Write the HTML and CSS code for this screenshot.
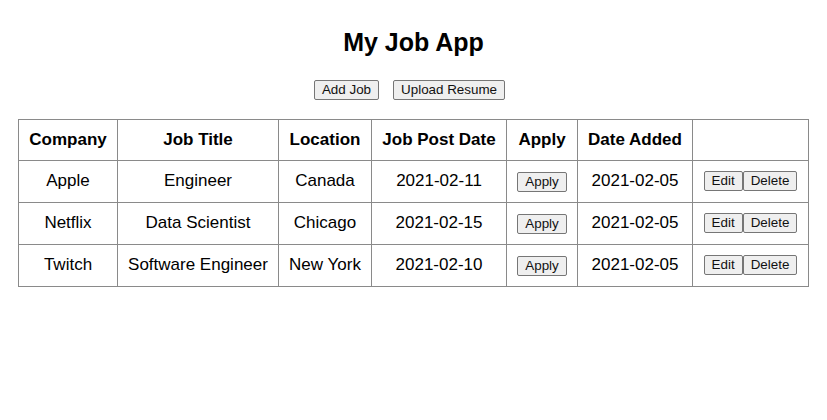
FILE: index.html
```html
<!DOCTYPE html>
<html lang="en">
<head>
<meta charset="utf-8">
<title>My Job App</title>
<link rel="stylesheet" href="styles.css">
</head>
<body>
<div class="app">
  <h1 class="title">My Job App</h1>
  <div class="actions">
    <button class="btn">Add Job</button>
    <button class="btn">Upload Resume</button>
  </div>
  <table class="jobs">
    <colgroup>
      <col class="c-company">
      <col class="c-title">
      <col class="c-location">
      <col class="c-post">
      <col class="c-apply">
      <col class="c-added">
      <col class="c-ops">
    </colgroup>
    <thead>
      <tr>
        <th>Company</th>
        <th>Job Title</th>
        <th>Location</th>
        <th>Job Post Date</th>
        <th>Apply</th>
        <th>Date Added</th>
        <th></th>
      </tr>
    </thead>
    <tbody>
      <tr>
        <td>Apple</td>
        <td>Engineer</td>
        <td>Canada</td>
        <td>2021-02-11</td>
        <td><button class="btn btn-sm">Apply</button></td>
        <td>2021-02-05</td>
        <td><div class="ops"><button class="btn btn-sm">Edit</button><button class="btn btn-sm">Delete</button></div></td>
      </tr>
      <tr>
        <td>Netflix</td>
        <td>Data Scientist</td>
        <td>Chicago</td>
        <td>2021-02-15</td>
        <td><button class="btn btn-sm">Apply</button></td>
        <td>2021-02-05</td>
        <td><div class="ops"><button class="btn btn-sm">Edit</button><button class="btn btn-sm">Delete</button></div></td>
      </tr>
      <tr>
        <td>Twitch</td>
        <td>Software Engineer</td>
        <td>New York</td>
        <td>2021-02-10</td>
        <td><button class="btn btn-sm">Apply</button></td>
        <td>2021-02-05</td>
        <td><div class="ops"><button class="btn btn-sm">Edit</button><button class="btn btn-sm">Delete</button></div></td>
      </tr>
    </tbody>
  </table>
</div>
</body>
</html>
```

FILE: styles.css
```css
html, body {
  background: #ffffff;
}
body {
  margin: 8px;
  font-family: "Liberation Sans", Arial, sans-serif;
  color: #000000;
}
.app {
  display: flex;
  flex-direction: column;
  align-items: center;
}
.title {
  font-size: 25px;
  font-weight: bold;
  line-height: 29px;
  margin: 20px 0 23px;
}
.actions {
  display: flex;
  gap: 14px;
  padding-right: 8px;
  margin-bottom: 19px;
}
.btn {
  font-family: "Liberation Sans", Arial, sans-serif;
  font-size: 13.4px;
  line-height: 16px;
  color: #111111;
  background: #efefef;
  border: 1px solid #767676;
  border-radius: 2px;
  padding: 1px 7px;
  margin: 0;
}
.btn-sm {
  padding: 1px 7px;
}
.ops {
  display: flex;
  justify-content: center;
}
.jobs {
  border-collapse: collapse;
  table-layout: fixed;
  width: 790px;
  font-size: 17px;
}
.jobs th,
.jobs td {
  border: 1px solid #8a8a8a;
  text-align: center;
  padding: 0 4px 1px;
  white-space: nowrap;
}
.jobs thead tr {
  height: 41px;
}
.jobs tbody tr {
  height: 42px;
}
.c-company { width: 99px; }
.c-title { width: 161px; }
.c-location { width: 93px; }
.c-post { width: 135px; }
.c-apply { width: 71px; }
.c-added { width: 115px; }
.c-ops { width: 116px; }
```
